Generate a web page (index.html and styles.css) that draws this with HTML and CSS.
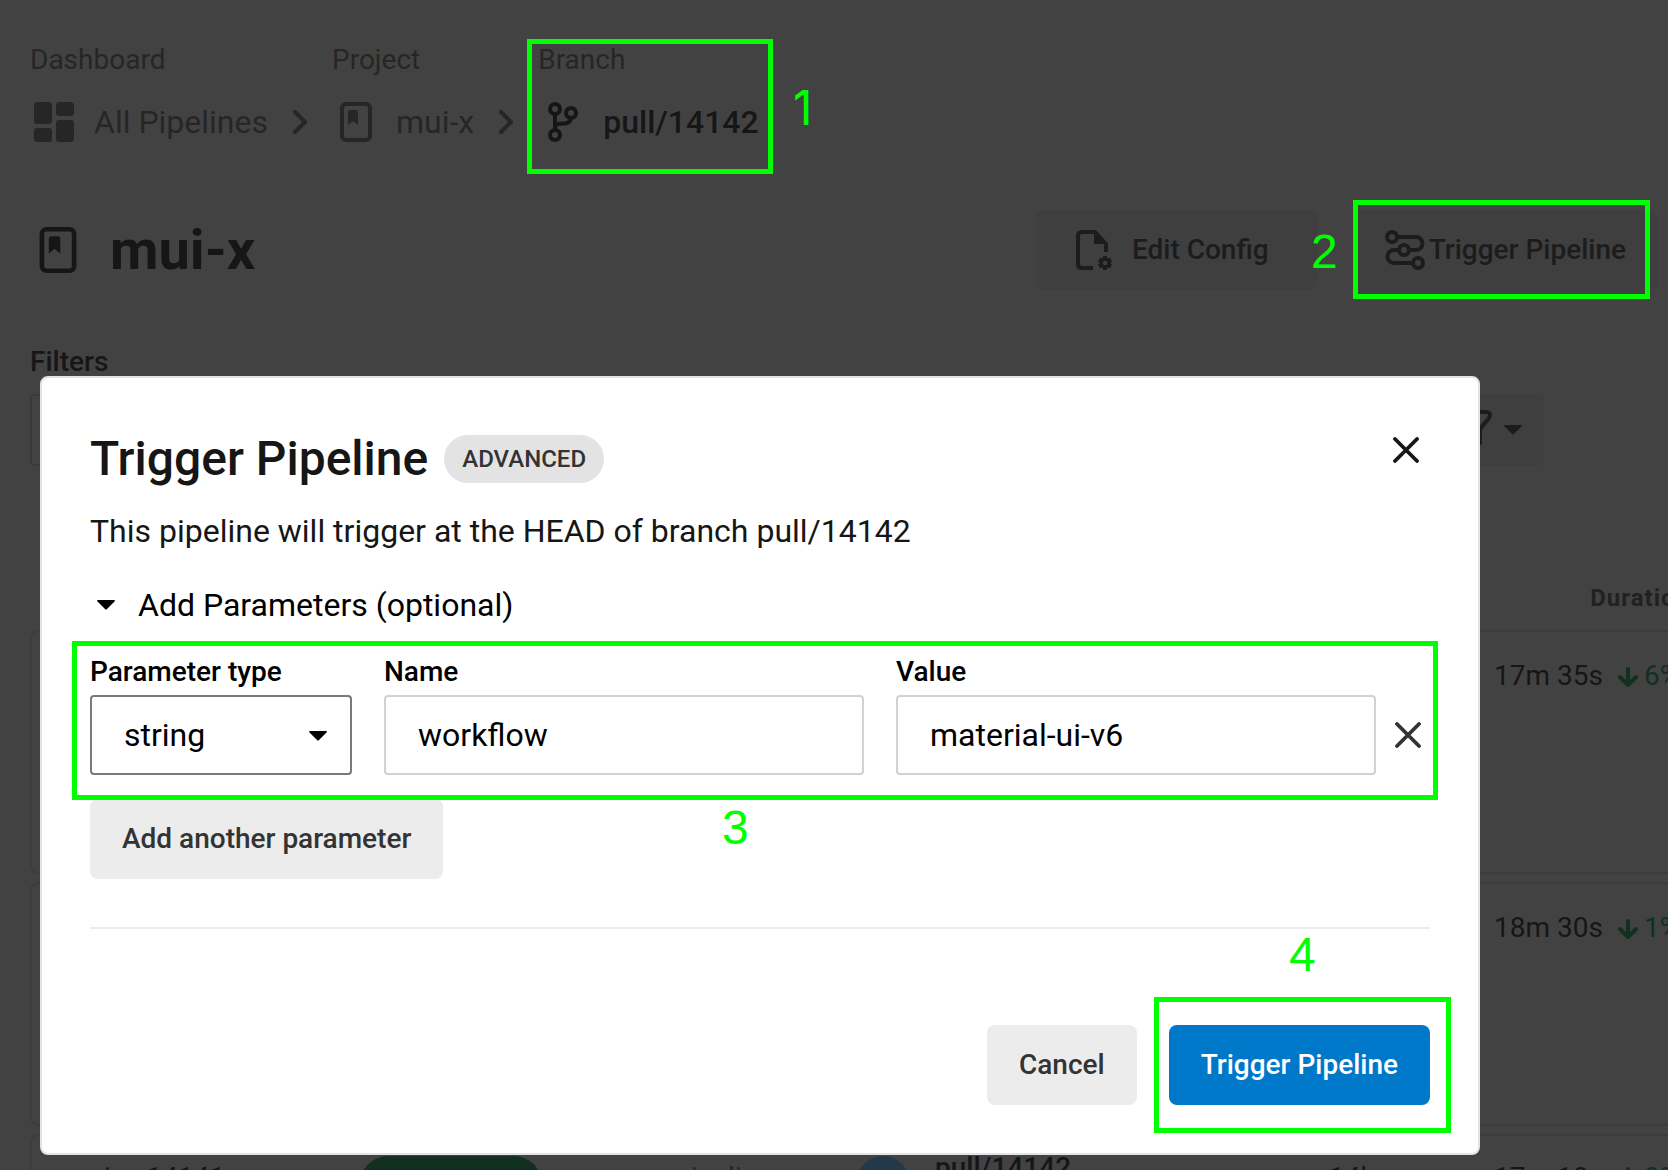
FILE: index.html
```html
<!DOCTYPE html>
<html lang="en">
<head>
<meta charset="utf-8">
<title>mui-x – Trigger Pipeline</title>
<link rel="stylesheet" href="styles.css">
</head>
<body>
<svg class="sprite" aria-hidden="true">
  <symbol id="i-project" viewBox="0 0 32 40"><rect x="2" y="2" width="28" height="36" rx="4" fill="none" stroke="currentColor" stroke-width="4"/><path d="M8 10q0-2 2-2h6q2 0 2 2v13l-5-4-5 4z" fill="currentColor"/></symbol>
  <symbol id="i-chevron" viewBox="0 0 14 24"><path d="M2 2l10 10L2 22" fill="none" stroke="currentColor" stroke-width="4" stroke-linecap="round" stroke-linejoin="round"/></symbol>
  <symbol id="i-caret" viewBox="0 0 18 10"><path d="M1 0h16q1 0 1 1l-8 8q-1 1-2 0L0 1q0-1 1-1z" fill="currentColor"/></symbol>
  <symbol id="i-close" viewBox="0 0 26 26"><path d="M2 2l22 22M24 2L2 24" fill="none" stroke="currentColor" stroke-width="3.8" stroke-linecap="round"/></symbol>
  <symbol id="i-down" viewBox="0 0 20 20"><path d="M10 2v15M2 10l8 8 8-8" fill="none" stroke="currentColor" stroke-width="4" stroke-linecap="round" stroke-linejoin="round"/></symbol>
</svg>

<div class="page">
  <nav class="crumbs" aria-label="Breadcrumb">
    <div class="crumb">
      <span class="crumb-label">Dashboard</span>
      <a class="crumb-link" href="#">
        <svg class="icon-md" viewBox="0 0 40 40" fill="currentColor"><path d="M4 0h11q3 0 3 3v16q0 3-3 3H3q-3 0-3-3V4q0-4 4-4zM25 0h11q4 0 4 4v7q0 3-3 3H25q-3 0-3-3V3q0-3 3-3zM3 26h12q3 0 3 3v8q0 3-3 3H4q-4 0-4-4v-7q0-3 3-3zM25 18h12q3 0 3 3v15q0 4-4 4H25q-3 0-3-3V21q0-3 3-3z"/></svg>
        <span>All Pipelines</span>
      </a>
    </div>
    <svg class="chevron"><use href="#i-chevron"/></svg>
    <div class="crumb">
      <span class="crumb-label">Project</span>
      <a class="crumb-link" href="#">
        <svg class="icon-md"><use href="#i-project"/></svg>
        <span>mui-x</span>
      </a>
    </div>
    <svg class="chevron"><use href="#i-chevron"/></svg>
    <div class="crumb">
      <span class="crumb-label">Branch</span>
      <a class="crumb-link current" href="#" aria-current="page">
        <svg class="icon-branch" viewBox="0 0 30 40" fill="none" stroke="currentColor" stroke-width="4"><circle cx="7" cy="7" r="5"/><circle cx="7" cy="33" r="5"/><circle cx="23" cy="11" r="5"/><path d="M7 12v16M23 16c-1 5-4 5.500-8 5.500-4 0-7 0-8 4"/></svg>
        <span>pull/14142</span>
      </a>
    </div>
  </nav>

  <header class="title-row">
    <svg class="icon-title"><use href="#i-project"/></svg>
    <h1>mui-x</h1>
    <div class="actions">
      <button class="btn ghost edit" type="button">
        <svg class="icon-md" viewBox="0 0 40 40"><path d="M19 38H8q-4 0-4-4V6q0-4 4-4h13l11 12v8" fill="none" stroke="currentColor" stroke-width="4"/><path d="M20 1l13 13H20z" fill="currentColor"/><circle cx="31" cy="33" r="4" fill="none" stroke="currentColor" stroke-width="3.500"/><path d="M31 26v3M31 37v3M25 29.500l2.500 1.500M34.500 35l2.500 1.500M25 36.500l2.500-1.500M34.500 31l2.500-1.500" stroke="currentColor" stroke-width="4"/></svg>
        <span>Edit Config</span>
      </button>
      <button class="btn ghost trigger" type="button">
        <svg class="icon-md" viewBox="0 0 40 40" fill="none" stroke="currentColor" stroke-width="4"><circle cx="7" cy="7" r="5"/><circle cx="19" cy="20" r="5"/><circle cx="33" cy="33" r="5"/><path d="M12 7h19a6.500 6.500 0 0 1 0 13h-7M14 20H9a6.500 6.500 0 0 0 0 13h19"/></svg>
        <span>Trigger Pipeline</span>
      </button>
    </div>
  </header>

  <section class="filters">
    <h2>Filters</h2>
    <div class="filter-row">
      <div class="filter-box"></div>
      <button class="filter-btn" type="button" aria-label="Filter by status">
        <svg class="icon-funnel" viewBox="0 0 40 40"><path d="M5 2h29q6 0 3 6l-9 11v14l-12 5V19L3 8q-3-6 2-6z" fill="none" stroke="currentColor" stroke-width="4"/></svg>
        <svg class="caret"><use href="#i-caret"/></svg>
      </button>
    </div>
  </section>

  <section class="runs">
    <div class="runs-head">Duration</div>
    <article class="run">
      <div class="duration"><span class="time">17m 35s</span><svg class="down"><use href="#i-down"/></svg><span class="trend">6%</span></div>
    </article>
    <article class="run">
      <div class="duration"><span class="time">18m 30s</span><svg class="down"><use href="#i-down"/></svg><span class="trend">1%</span></div>
    </article>
    <article class="run detailed">
      <span class="run-id"><span>mui-x</span><span>14141</span></span>
      <span class="status">Success</span>
      <a class="workflow" href="#">pipeline</a>
      <span class="avatar"></span>
      <span class="branch-name">pull/14142</span>
      <span class="ago">14h ago</span>
      <div class="duration"><span class="time">17m 18s</span><svg class="down"><use href="#i-down"/></svg><span class="trend">0%</span></div>
    </article>
  </section>
</div>

<div class="overlay">
  <form class="modal" role="dialog" aria-labelledby="dialog-title">
    <div class="modal-head">
      <h2 id="dialog-title">Trigger Pipeline</h2>
      <span class="badge">ADVANCED</span>
      <button class="icon-btn close" type="button" aria-label="Close"><svg><use href="#i-close"/></svg></button>
    </div>
    <p class="lead">This pipeline will trigger at the HEAD of branch pull/14142</p>
    <button class="disclosure" type="button" aria-expanded="true">
      <svg class="caret"><use href="#i-caret"/></svg><span>Add Parameters (optional)</span>
    </button>
    <div class="params">
      <div class="field type">
        <label for="ptype">Parameter type</label>
        <div class="select-wrap">
          <select id="ptype"><option>string</option></select>
          <svg class="caret"><use href="#i-caret"/></svg>
        </div>
      </div>
      <div class="field">
        <label for="pname">Name</label>
        <input id="pname" type="text" value="workflow">
      </div>
      <div class="field">
        <label for="pvalue">Value</label>
        <input id="pvalue" type="text" value="material-ui-v6">
      </div>
      <button class="icon-btn remove" type="button" aria-label="Remove parameter"><svg><use href="#i-close"/></svg></button>
    </div>
    <button class="btn add" type="button">Add another parameter</button>
    <hr>
    <div class="modal-foot">
      <button class="btn" type="button">Cancel</button>
      <button class="btn primary" type="submit">Trigger Pipeline</button>
    </div>
  </form>
</div>

<div class="mark mark-1"></div><span class="num num-1">1</span>
<div class="mark mark-2"></div><span class="num num-2">2</span>
<div class="mark mark-3"></div><span class="num num-3">3</span>
<div class="mark mark-4"></div><span class="num num-4">4</span>
</body>
</html>
```
FILE: styles.css
```css
* { box-sizing: border-box; }

body {
  position: relative;
  margin: 0;
  min-height: 100vh;
  background: #424242;
  color: #161616;
  font: 400 28px/40px Roboto, "Liberation Sans", sans-serif;
}

h1, h2, p { margin: 0; }
svg { display: block; flex: none; }
a { color: inherit; text-decoration: none; }
button, input, select { font: inherit; color: inherit; }
.sprite { position: absolute; width: 0; height: 0; }

/* page behind the dialog */
.page {
  height: 100vh;
  overflow: hidden;
  padding: 40px 10px 0 30px;
}

.crumbs { display: flex; align-items: flex-end; color: #262626; }
.crumb { display: flex; flex-direction: column; gap: 20px; }
.crumb-link {
  display: flex;
  align-items: center;
  gap: 20px;
  height: 44px;
  padding-left: 4px;
  font-size: 32px;
}
.crumb-link.current { gap: 25px; padding-left: 10px; color: #161616; font-weight: 500; }
.chevron { width: 14px; height: 24px; margin: 0 25px 10px; }
.icon-md { width: 40px; height: 40px; }
.icon-branch { width: 30px; height: 40px; }

.title-row { display: flex; align-items: center; height: 80px; margin-top: 66px; }
.icon-title { width: 38px; height: 46px; margin-left: 9px; }
h1 { margin-left: 33px; font-size: 56px; font-weight: 700; line-height: 64px; }
.actions { display: flex; gap: 36px; margin-left: auto; }

.btn {
  display: flex;
  align-items: center;
  justify-content: center;
  height: 80px;
  padding: 0 32px;
  border: 0;
  border-radius: 8px;
  background: #ececec;
  color: #333;
  font-weight: 500;
  white-space: nowrap;
}
.ghost { background: #3f3f3f; color: #1c1c1c; }
.edit { gap: 18px; padding: 0 48px 0 38px; }
.trigger { gap: 4px; }

.filters { margin-top: 52px; }
.filters h2 { font-size: 28px; font-weight: 500; line-height: 40px; }
.filter-row { display: flex; margin-top: 12px; padding-right: 114px; }
.filter-box { flex: 1; height: 72px; border: 2px solid #3a3a3a; border-radius: 4px; }
.filter-btn {
  display: flex;
  align-items: center;
  gap: 12px;
  height: 72px;
  margin-left: 32px;
  padding: 0 22px 0 32px;
  border: 0;
  border-radius: 8px;
  background: #3f3f3f;
  color: #1c1c1c;
}
.icon-funnel { width: 40px; height: 40px; }
.caret { width: 18px; height: 10px; }

.runs { margin: 112px -40px 0 0; }
.runs-head {
  height: 52px;
  padding-right: 8px;
  color: #212121;
  font-size: 24px;
  font-weight: 700;
  line-height: 40px;
  letter-spacing: 1px;
  text-align: right;
}
.run {
  height: 244px;
  margin-bottom: 8px;
  padding: 24px 10px 0 32px;
  border: 2px solid #3c3c3c;
  border-radius: 8px;
}
.duration { display: flex; justify-content: flex-end; }
.down { width: 20px; height: 20px; margin: 11px 6px 0 15px; color: #12301f; }
.trend { width: 42px; color: #12301f; }

.run.detailed {
  display: grid;
  grid-template-columns: 296px 315px 182px 78px 1fr 165px auto;
  align-items: start;
  padding-top: 20px;
  line-height: 44px;
}
.run-id { display: flex; gap: 14px; }
.status {
  width: 182px;
  border-radius: 28px;
  background: #12301f;
  line-height: 56px;
  text-align: center;
}
.workflow { color: #15293d; }
.avatar { width: 52px; height: 52px; border-radius: 50%; background: #24384c; }
.branch-name { font-weight: 500; line-height: 24px; }

/* dialog */
.overlay { position: absolute; inset: 0; padding: 376px 188px 14px 40px; }
.modal {
  max-width: 1440px;
  padding: 47px 48px 48px;
  border: 2px solid #e3e3e3;
  border-radius: 8px;
  background: #fff;
}
.modal-head { display: flex; align-items: center; }
.modal-head h2 { font-size: 48px; font-weight: 500; line-height: 68px; }
.badge {
  margin-left: 16px;
  padding: 0 18px;
  border-radius: 24px;
  background: #e3e3e3;
  color: #333;
  font-size: 24px;
  font-weight: 500;
  line-height: 48px;
}
.icon-btn { padding: 0; border: 0; background: none; color: #333; }
.icon-btn svg { width: 26px; height: 26px; }
.close { align-self: flex-start; margin: 12px 11px 0 auto; color: #161616; }
.lead { margin-top: 14px; font-size: 32px; line-height: 48px; }
.disclosure {
  display: flex;
  align-items: center;
  gap: 23px;
  margin-top: 26px;
  padding: 0 0 0 7px;
  border: 0;
  background: none;
  color: #000;
  font-size: 32px;
  line-height: 48px;
}
.params { display: flex; align-items: flex-end; gap: 32px; margin-top: 23px; color: #000; }
.field { flex: 480 1 0; min-width: 0; }
.field.type { flex-grow: 262; }
.field label { display: block; margin-bottom: 3px; font-weight: 500; line-height: 40px; }
.field input, .field select {
  display: block;
  width: 100%;
  height: 80px;
  padding: 0 32px;
  border: 2px solid #d2d2d2;
  border-radius: 4px;
  background: #fff;
  font-size: 32px;
}
.field select { appearance: none; border-color: #7a7a7a; }
.select-wrap { position: relative; }
.select-wrap .caret { position: absolute; top: 36px; right: 25px; pointer-events: none; }
.remove { margin: 0 9px 27px -13px; }
.add { margin-top: 24px; }
hr { height: 2px; margin: 48px 0 96px; border: 0; background: #ededed; }
.modal-foot { display: flex; justify-content: flex-end; gap: 32px; }
.primary { background: #0078ca; color: #fff; }

/* numbered walkthrough marks drawn over the screen */
.mark { position: absolute; border: 5px solid #0f0; pointer-events: none; }
.mark-1 { left: 527px; top: 39px; width: 246px; height: 135px; }
.mark-2 { left: 1353px; top: 200px; width: 297px; height: 99px; }
.mark-3 { left: 72px; top: 641px; width: 1366px; height: 159px; }
.mark-4 { left: 1154px; top: 997px; width: 297px; height: 136px; }
.num { position: absolute; color: #0f0; font: 48px/56px "Liberation Sans", sans-serif; }
.num-1 { left: 793px; top: 80px; font-family: Inter, sans-serif; }
.num-2 { left: 1311px; top: 224px; }
.num-3 { left: 722px; top: 800px; }
.num-4 { left: 1289px; top: 927px; }
```
